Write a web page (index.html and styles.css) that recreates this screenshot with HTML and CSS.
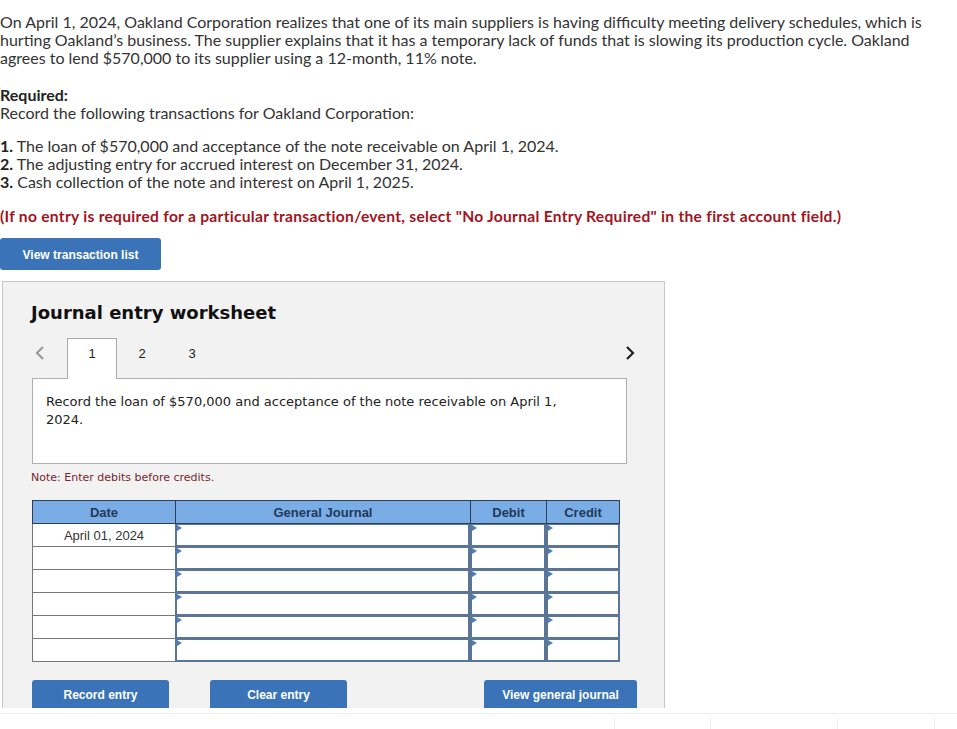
FILE: index.html
```html
<!DOCTYPE html>
<html>
<head>
<meta charset="utf-8">
<link rel="stylesheet" href="styles.css">
</head>
<body>
<div class="page">
  <p class="intro">On April 1, 2024, Oakland Corporation realizes that one of its main suppliers is having difficulty meeting delivery schedules, which is hurting Oakland’s business. The supplier explains that it has a temporary lack of funds that is slowing its production cycle. Oakland agrees to lend $570,000 to its supplier using a 12-month, 11% note.</p>
  <p class="req"><strong>Required:</strong><br>Record the following transactions for Oakland Corporation:</p>
  <ol class="steps">
    <li><b>1.</b> The loan of $570,000 and acceptance of the note receivable on April 1, 2024.</li>
    <li><b>2.</b> The adjusting entry for accrued interest on December 31, 2024.</li>
    <li><b>3.</b> Cash collection of the note and interest on April 1, 2025.</li>
  </ol>
  <p class="warn">(If no entry is required for a particular transaction/event, select "No Journal Entry Required" in the first account field.)</p>
  <button class="btn btn-list">View transaction list</button>

  <div class="panel">
    <h2 class="title">Journal entry worksheet</h2>
    <div class="tabs">
      <span class="chev chev-left"><svg width="12" height="16" viewBox="0 0 12 16"><polyline points="9,2 3,8 9,14" fill="none" stroke="#9a9a9a" stroke-width="2.2"/></svg></span>
      <span class="tab active">1</span>
      <span class="tab">2</span>
      <span class="tab">3</span>
      <span class="chev chev-right"><svg width="12" height="16" viewBox="0 0 12 16"><polyline points="3,2 9,8 3,14" fill="none" stroke="#222" stroke-width="2.2"/></svg></span>
    </div>
    <div class="desc">Record the loan of $570,000 and acceptance of the note receivable on April 1, 2024.</div>
    <p class="note">Note: Enter debits before credits.</p>
    <div class="jtable">
      <div class="th">Date</div>
      <div class="th">General Journal</div>
      <div class="th">Debit</div>
      <div class="th">Credit</div>

      <div class="dt">April 01, 2024</div><div class="in"></div><div class="in"></div><div class="in"></div>
      <div class="dt"></div><div class="in"></div><div class="in"></div><div class="in"></div>
      <div class="dt"></div><div class="in"></div><div class="in"></div><div class="in"></div>
      <div class="dt"></div><div class="in"></div><div class="in"></div><div class="in"></div>
      <div class="dt"></div><div class="in"></div><div class="in"></div><div class="in"></div>
      <div class="dt"></div><div class="in"></div><div class="in"></div><div class="in"></div>
    </div>
    <div class="actions">
      <button class="btn btn-rec">Record entry</button>
      <button class="btn btn-clear">Clear entry</button>
      <button class="btn btn-view">View general journal</button>
    </div>
  </div>
  <div class="below">
    <span class="cell c1"></span><span class="cell c2"></span><span class="cell c3"></span><span class="cell c4"></span>
  </div>
</div>
</body>
</html>
```
FILE: styles.css
```css
html, body {
  margin: 0;
  padding: 0;
  background: #fff;
}
body {
  font-family: Lato, "Open Sans", sans-serif;
  font-size: 16px;
  color: #333;
  overflow: hidden;
}
.page {
  width: 957px;
  height: 729px;
  overflow: hidden;
}
.intro {
  margin: 0;
  padding-top: 13px;
  line-height: 18px;
  width: 930px;
}
.req {
  margin: 19px 0 0;
  line-height: 18px;
}
.req strong { color: #222; }
.steps {
  list-style: none;
  margin: 15px 0 0;
  padding: 0;
  line-height: 18px;
}
.steps b { color: #222; }
.warn {
  margin: 16px 0 0;
  line-height: 18px;
  font-size: 15.6px;
  letter-spacing: 0.28px;
  color: #a2141e;
  font-weight: bold;
}
.btn {
  display: block;
  border: none;
  border-radius: 3px;
  background: #3a73b8;
  color: #fff;
  font-family: "Liberation Sans", Arial, sans-serif;
  font-weight: bold;
  font-size: 12px;
  padding: 0;
  cursor: pointer;
}
.btn-list {
  margin-top: 13px;
  width: 161px;
  height: 32px;
  padding-top: 1px;
}
.panel {
  margin: 11px 0 0 2px;
  width: 663px;
  height: 427px;
  border: 1px solid #c8c8c8;
  border-bottom: none;
  background: #f2f2f2;
  box-sizing: border-box;
  padding: 0 0 0 28px;
  overflow: hidden;
}
.title {
  margin: 19px 0 0;
  font-family: "DejaVu Sans", Verdana, sans-serif;
  font-weight: bold;
  font-size: 18px;
  line-height: 24px;
  color: #111;
}
.tabs {
  display: flex;
  align-items: stretch;
  height: 40px;
  margin-top: 13px;
  width: 605px;
}
.chev {
  display: flex;
  align-items: flex-start;
  padding-top: 7px;
}
.chev-left {
  width: 36px;
  padding-left: 3px;
  box-sizing: border-box;
}
.chev-right {
  margin-left: auto;
}
.tab {
  width: 50px;
  display: flex;
  justify-content: center;
  padding-top: 8px;
  font-family: "Liberation Sans", Arial, sans-serif;
  font-size: 13px;
  line-height: 15px;
  color: #222;
  box-sizing: border-box;
}
.tab.active {
  background: #fff;
  border: 1px solid #aaa;
  border-bottom: none;
  position: relative;
  z-index: 1;
  height: 41px;
  padding-top: 7px;
}
.desc {
  width: 595px;
  height: 86px;
  box-sizing: border-box;
  border: 1px solid #b0b0b0;
  background: #fff;
  padding: 14px 60px 0 13px;
  font-family: "DejaVu Sans", Verdana, sans-serif;
  font-size: 13px;
  line-height: 18px;
  color: #222;
  margin-left: 1px;
}
.note {
  margin: 7px 0 0;
  font-family: "DejaVu Sans", Verdana, sans-serif;
  font-size: 11px;
  line-height: 14px;
  color: #7a1f2b;
}
.jtable {
  margin-top: 15px;
  display: grid;
  grid-template-columns: 143px 295px 76px 74px;
  grid-template-rows: 24px repeat(6, 23px);
  width: 588px;
  margin-left: 1px;
}
.th {
  background: #7aade6;
  border: 1px solid #2d3f55;
  border-right: none;
  display: flex;
  align-items: center;
  justify-content: center;
  font-family: "Liberation Sans", Arial, sans-serif;
  font-size: 13px;
  font-weight: bold;
  color: #22395a;
  box-sizing: border-box;
}
.th:nth-child(4) { border-right: 1px solid #2d3f55; }
.dt {
  background: #fff;
  border-left: 1px solid #777;
  border-bottom: 1px solid #777;
  display: flex;
  align-items: center;
  justify-content: center;
  font-family: "Liberation Sans", Arial, sans-serif;
  font-size: 13px;
  color: #333;
  box-sizing: border-box;
}
.in {
  background: #fff;
  border: 2px solid #5a7596;
  border-top-width: 1px;
  box-sizing: border-box;
  position: relative;
}
.in::before {
  content: "";
  position: absolute;
  left: 0;
  top: 0;
  border-left: 5px solid #4d7fbd;
  border-top: 3px solid transparent;
  border-bottom: 3px solid transparent;
}
.actions {
  display: flex;
  margin-top: 18px;
  margin-left: 1px;
}
.actions .btn { height: 30px; }
.btn-rec { width: 137px; }
.btn-clear { width: 137px; margin-left: 41px; }
.btn-view { width: 153px; margin-left: 137px; }
.below {
  margin-top: 5px;
  border-top: 1px solid #eeeeee;
  height: 20px;
  display: flex;
  padding-top: 4px;
  box-sizing: border-box;
}
.cell {
  height: 16px;
  border-left: 1px solid #eeeeee;
}
.c1 { margin-left: 614px; width: 96px; }
.c2 { width: 127px; }
.c3 { width: 97px; }
.c4 { width: 22px; }
```
